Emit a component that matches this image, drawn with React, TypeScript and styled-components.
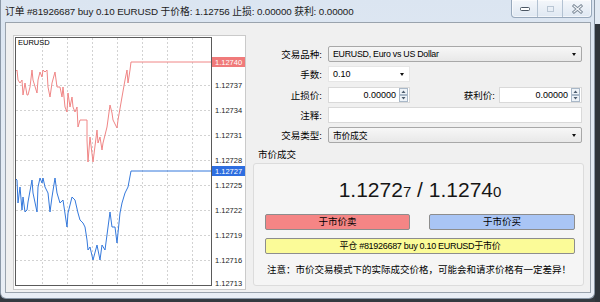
import styled, { createGlobalStyle } from "styled-components";

const FONT = `"Liberation Sans", "Noto Sans CJK SC", sans-serif`;

const GlobalStyle = createGlobalStyle`
  html, body { margin: 0; padding: 0; }
  body {
    width: 600px;
    height: 302px;
    overflow: hidden;
    background: #343a40;
    font-family: ${FONT};
    color: #000;
  }
  * { box-sizing: border-box; }
`;

// tick data in page coordinates (shifted into the chart by the svg group)
const askTicks = [
  [15, 72], [17, 70], [18, 80], [20, 83], [22, 80], [23, 95], [25, 83], [27, 95], [28, 95], [30, 87],
  [32, 70], [33, 80], [37, 93], [38, 80], [40, 72], [42, 77], [43, 70], [45, 72], [47, 70], [48, 87],
  [50, 97], [52, 83], [55, 72], [57, 87], [60, 87], [62, 97], [63, 87], [65, 107], [67, 112], [68, 93],
  [70, 107], [72, 97], [73, 107], [75, 112], [77, 107], [78, 127], [80, 120], [83, 120], [87, 120],
  [87, 140], [88, 162], [90, 137], [93, 162], [97, 130], [98, 143], [100, 137], [102, 150], [103, 143],
  [107, 127], [110, 105], [112, 113], [113, 120], [117, 128], [118, 120], [122, 97], [125, 80], [127, 70],
  [128, 83], [130, 70], [131, 62], [211, 62],
];

const bidTicks = [
  [15, 178], [17, 180], [18, 203], [20, 187], [22, 210], [23, 197], [25, 212], [27, 210], [28, 202],
  [32, 180], [33, 193], [37, 212], [38, 187], [40, 178], [42, 183], [43, 178], [45, 187], [48, 193],
  [50, 212], [52, 197], [55, 178], [57, 193], [60, 203], [63, 200], [67, 227], [68, 213], [72, 197],
  [75, 200], [78, 213], [80, 220], [83, 223], [85, 227], [87, 240], [88, 250], [90, 247], [93, 260],
  [97, 245], [100, 260], [102, 245], [105, 250], [110, 212], [112, 227], [115, 227], [117, 243],
  [120, 213], [122, 203], [125, 193], [128, 187], [131, 171], [211, 171],
];

const priceScale = [
  ["1.12737", 85], ["1.12734", 110], ["1.12731", 135], ["1.12728", 160], ["1.12725", 185],
  ["1.12722", 210], ["1.12719", 235], ["1.12716", 260], ["1.12713", 283],
] as const;

const gridX = [42, 67, 92, 117, 142, 167, 192];

const toPoints = (ticks: number[][]) => ticks.map(([x, y]) => `${x},${y}`).join(" ");

function TickChart() {
  return (
    <St.ChartSvg width="231" height="253" viewBox="0 0 231 253">
      <g transform="translate(-14,-36)">
        {gridX.map((x) => (
          <line key={x} x1={x + 0.5} y1={38} x2={x + 0.5} y2={285} stroke="#d2d2d2" strokeDasharray="2 2" />
        ))}
        {priceScale.slice(0, 8).map(([, y]) => (
          <line key={y} x1={16} y1={y + 0.5} x2={211} y2={y + 0.5} stroke="#d2d2d2" strokeDasharray="2 2" />
        ))}
        <polyline points={toPoints(askTicks)} fill="none" stroke="#f08686" strokeWidth="1" />
        <polyline points={toPoints(bidTicks)} fill="none" stroke="#3579dc" strokeWidth="1" />
        <rect x={15.5} y={37.5} width={196} height={248} fill="none" stroke="#5a5a5a" />
        <text x={18} y={45} fontSize="7.5" fill="#000">EURUSD</text>
        {priceScale.map(([label, y]) => (
          <text key={label} x={215} y={y + 2.8} fontSize="7.5" fill="#222">
            {label}
          </text>
        ))}
        <rect x={212} y={57} width={33} height={10} fill="#f07a7a" />
        <text x={215} y={64.8} fontSize="7.5" fill="#fff">1.12740</text>
        <rect x={212} y={166} width={33} height={10} fill="#2e6ee0" />
        <text x={215} y={173.8} fontSize="7.5" fill="#fff">1.12727</text>
      </g>
    </St.ChartSvg>
  );
}

function ComboArrow() {
  return <St.Arrow />;
}

function Spinner() {
  return (
    <St.SpinButtons>
      <svg width="9" height="14" viewBox="0 0 9 14">
        <rect x="0.5" y="0.5" width="8" height="6" fill="#eef3f8" stroke="#a9b8c8" />
        <rect x="0.5" y="7.5" width="8" height="6" fill="#eef3f8" stroke="#a9b8c8" />
        <path d="M2.5 5 L4.5 2.5 L6.5 5 Z" fill="#4a5a6c" />
        <path d="M2.5 9 L4.5 11.5 L6.5 9 Z" fill="#4a5a6c" />
      </svg>
    </St.SpinButtons>
  );
}

export default function App() {
  return (
    <>
      <GlobalStyle />
      <St.Screen>
        <St.Window>
          <St.TitleBar>
            <St.Title>订单 #81926687 buy 0.10 EURUSD 于价格: 1.12756 止损: 0.00000 获利: 0.00000</St.Title>
            <St.Caption>
              <St.CaptionBtn $w={25}>
                <svg width="12" height="6" viewBox="0 0 12 6">
                  <rect x="1.5" y="1.5" width="9" height="3" rx="1" fill="#fff" stroke="#4b5663" />
                </svg>
              </St.CaptionBtn>
              <St.CaptionBtn $w={25}>
                <svg width="9" height="8" viewBox="0 0 9 8">
                  <rect x="1.5" y="1.5" width="6" height="5" fill="none" stroke="#b9c6d4" />
                </svg>
              </St.CaptionBtn>
              <St.CaptionBtn $w={29}>
                <svg width="11" height="10" viewBox="0 0 11 10">
                  <path d="M2 2 L9 8 M9 2 L2 8" stroke="#7d8a98" strokeWidth="3" strokeLinecap="square" />
                  <path d="M2 2 L9 8 M9 2 L2 8" stroke="#f5f8fb" strokeWidth="1.2" strokeLinecap="square" />
                </svg>
              </St.CaptionBtn>
            </St.Caption>
          </St.TitleBar>

          <St.Client>
            <St.ChartPanel>
              <TickChart />
            </St.ChartPanel>

            <St.RightPane>
              <St.FormGrid>
                <St.Label>交易品种:</St.Label>
                <St.Combo>
                  <span>EURUSD, Euro vs US Dollar</span>
                  <ComboArrow />
                </St.Combo>

                <St.Label>手数:</St.Label>
                <St.LotField>
                  <span>0.10</span>
                  <ComboArrow />
                </St.LotField>

                <St.Label>止损价:</St.Label>
                <St.SpinRow>
                  <St.SpinInput $w={82}>
                    <St.SpinValue>0.00000</St.SpinValue>
                    <Spinner />
                  </St.SpinInput>
                  <St.InlineLabel>获利价:</St.InlineLabel>
                  <St.SpinInput $w={83}>
                    <St.SpinValue>0.00000</St.SpinValue>
                    <Spinner />
                  </St.SpinInput>
                </St.SpinRow>

                <St.Label>注释:</St.Label>
                <St.TextField />

                <St.Label>交易类型:</St.Label>
                <St.Combo>
                  <span>市价成交</span>
                  <ComboArrow />
                </St.Combo>
              </St.FormGrid>

              <St.GroupTitle>市价成交</St.GroupTitle>
              <St.Group>
                <St.PriceLine>
                  1.1272<small>7</small> / 1.1274<small>0</small>
                </St.PriceLine>
                <St.ButtonRow>
                  <St.TradeButton $bg="#f58585" $w={145}>于市价卖</St.TradeButton>
                  <St.TradeButton $bg="#a9c5f5" $w={146}>于市价买</St.TradeButton>
                </St.ButtonRow>
                <St.CloseButton $bg="#fbfb98">平仓 #81926687 buy 0.10 EURUSD于市价</St.CloseButton>
                <St.Notice>注意：市价交易模式下的实际成交价格，可能会和请求价格有一定差异！</St.Notice>
              </St.Group>
            </St.RightPane>
          </St.Client>
        </St.Window>
        <St.EdgeStrip />
      </St.Screen>
    </>
  );
}

const St = {
  Screen: styled.div`
    display: flex;
    width: 600px;
    height: 302px;
  `,
  Window: styled.div`
    width: 595px;
    height: 299px;
    display: flex;
    flex-direction: column;
    padding: 0 3px 5px 4px;
    background: linear-gradient(180deg, #dbe5f1 0%, #e3ebf4 45%, #e9eef5 100%);
    border: 1px solid #8b98a7;
    border-top: none;
    border-radius: 0 0 6px 6px;
  `,
  EdgeStrip: styled.div`
    flex: 1;
    background: linear-gradient(180deg, #e2eaf3 0, #e2eaf3 24px, #2f353b 24px);
  `,
  TitleBar: styled.div`
    height: 22px;
    flex-shrink: 0;
    display: flex;
    justify-content: space-between;
    align-items: flex-start;
  `,
  Title: styled.div`
    padding-top: 6px;
    font-size: 9.8px;
    line-height: 12px;
    letter-spacing: -0.1px;
    white-space: nowrap;
    color: #1b1b1b;
  `,
  Caption: styled.div`
    display: flex;
    height: 18px;
    margin-right: -1px;
    border: 1px solid #98a9bc;
    border-top: none;
    border-radius: 0 0 4px 4px;
    overflow: hidden;
    background: linear-gradient(180deg, #f4f7fb 0%, #dfe8f2 100%);
    box-shadow: inset 0 0 0 1px rgba(255, 255, 255, 0.6);
  `,
  CaptionBtn: styled.div<{ $w: number }>`
    width: ${({ $w }) => $w}px;
    display: flex;
    align-items: center;
    justify-content: center;
    & + & {
      border-left: 1px solid #b3c2d2;
    }
  `,
  Client: styled.div`
    flex: 1;
    display: flex;
    align-items: flex-start;
    border: 1px solid #9aa3ad;
    background: #f0f0f0;
    padding: 12px 5px 2px 7px;
  `,
  ChartPanel: styled.div`
    width: 233px;
    height: 255px;
    flex-shrink: 0;
    border: 1px solid #cacaca;
    background: #fff;
  `,
  ChartSvg: styled.svg`
    display: block;
    font-family: "Liberation Sans", sans-serif;
  `,
  RightPane: styled.div`
    flex: 1;
    align-self: stretch;
    margin-left: 7px;
    display: flex;
    flex-direction: column;
  `,
  FormGrid: styled.div`
    display: grid;
    grid-template-columns: 69px 1fr;
    grid-auto-rows: 16px;
    column-gap: 6px;
    row-gap: 4.25px;
    align-items: center;
    margin-top: 11px;
    padding-right: 3px;
  `,
  Label: styled.div`
    text-align: right;
    font-size: 9.5px;
    white-space: nowrap;
  `,
  Combo: styled.div`
    height: 16px;
    display: flex;
    align-items: center;
    justify-content: space-between;
    padding: 0 5px 0 4px;
    border: 1px solid #a8a8a8;
    border-radius: 2px;
    background: linear-gradient(180deg, #f7f7f7 0%, #e8e8e8 100%);
    font-size: 8.8px;
    letter-spacing: -0.25px;
    white-space: nowrap;
  `,
  LotField: styled.div`
    width: 82px;
    height: 16px;
    display: flex;
    align-items: center;
    justify-content: space-between;
    padding: 0 5px 0 4px;
    background: #fff;
    border: 1px solid #e6e6e6;
    font-size: 9px;
  `,
  Arrow: styled.span`
    width: 0;
    height: 0;
    border-left: 2.5px solid transparent;
    border-right: 2.5px solid transparent;
    border-top: 3px solid #111;
  `,
  SpinRow: styled.div`
    height: 16px;
    display: flex;
    align-items: center;
  `,
  SpinInput: styled.div<{ $w: number }>`
    width: ${({ $w }) => $w}px;
    height: 16px;
    display: flex;
    align-items: center;
    background: #fff;
    border: 1px solid #d9d9d9;
    padding-right: 1px;
  `,
  SpinValue: styled.span`
    flex: 1;
    text-align: right;
    padding-right: 3px;
    font-size: 9px;
  `,
  SpinButtons: styled.span`
    display: flex;
  `,
  InlineLabel: styled.span`
    flex: 1;
    text-align: right;
    padding-right: 4px;
    font-size: 9.5px;
  `,
  TextField: styled.div`
    height: 16px;
    background: #fff;
    border: 1px solid #d9d9d9;
  `,
  GroupTitle: styled.div`
    margin-top: 6px;
    padding-left: 5px;
    font-size: 9.5px;
    line-height: 12px;
  `,
  Group: styled.div`
    flex: 1;
    margin: 2px 1px 4px 0;
    display: flex;
    flex-direction: column;
    padding: 14px 8px 0 11px;
    border: 1px solid #dcdcdc;
    border-radius: 3px;
    background: #f5f5f5;
  `,
  PriceLine: styled.div`
    height: 24px;
    line-height: 24px;
    text-align: center;
    font-size: 21px;
    color: #151515;
    small {
      font-size: 15px;
    }
  `,
  ButtonRow: styled.div`
    display: flex;
    justify-content: space-between;
    margin-top: 12px;
  `,
  TradeButton: styled.div<{ $bg: string; $w: number }>`
    width: ${({ $w }) => $w}px;
    height: 16px;
    line-height: 14px;
    text-align: center;
    font-size: 9.5px;
    background: ${({ $bg }) => $bg};
    border: 1px solid #8d8d8d;
    border-radius: 2px;
  `,
  CloseButton: styled.div<{ $bg: string }>`
    margin-top: 8px;
    height: 16px;
    line-height: 14px;
    text-align: center;
    font-size: 9px;
    letter-spacing: -0.3px;
    white-space: nowrap;
    background: ${({ $bg }) => $bg};
    border: 1px solid #8d8d8d;
    border-radius: 2px;
  `,
  Notice: styled.div`
    margin-top: 10px;
    padding-left: 2px;
    font-size: 9.5px;
    line-height: 12px;
    white-space: nowrap;
  `,
};
